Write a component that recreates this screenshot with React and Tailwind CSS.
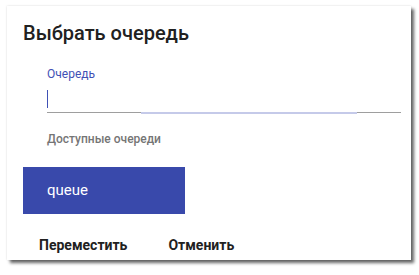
import React from 'react';

const App = () => {
  return (
    <div className="w-[419px] h-[275px] bg-white pt-[6px] pl-[7px]" style={{ fontFamily: 'Roboto, "Liberation Sans", sans-serif' }}>
      <div className="w-[404px] h-[254px] bg-white shadow-[3px_3px_3px_rgba(0,0,0,0.6),0_0_2px_rgba(0,0,0,0.15)] flex flex-col">
        <h2 className="pt-[15px] pl-4 text-[20px] leading-6 font-medium text-[#212121]">Выбрать очередь</h2>

        <div className="pl-10 pr-[10px] mt-[21px]">
          <label className="block text-xs leading-4 text-[#3f51b5]">Очередь</label>
          <div className="relative h-[31px] border-b border-[#9e9e9e] flex items-center">
            <span className="w-px h-[18px] bg-[#3f51b5] mt-[4px]" />
            <span className="absolute left-[94px] w-[216px] bottom-[-2px] h-[2px] bg-[#c5cae9]" />
          </div>
          <div className="mt-[18px] text-xs leading-4 font-medium text-[#757575]">Доступные очереди</div>
        </div>

        <div className="mt-[20px] ml-4 w-[162px] h-[47px] bg-[#3949ab] flex items-center pl-6 text-[15px] text-white">queue</div>

        <div className="flex items-center pl-8 gap-[41px] mt-[21px] text-[14px] font-bold text-[#212121]">
          <button>Переместить</button>
          <button>Отменить</button>
        </div>
      </div>
    </div>
  );
};

export default App;
